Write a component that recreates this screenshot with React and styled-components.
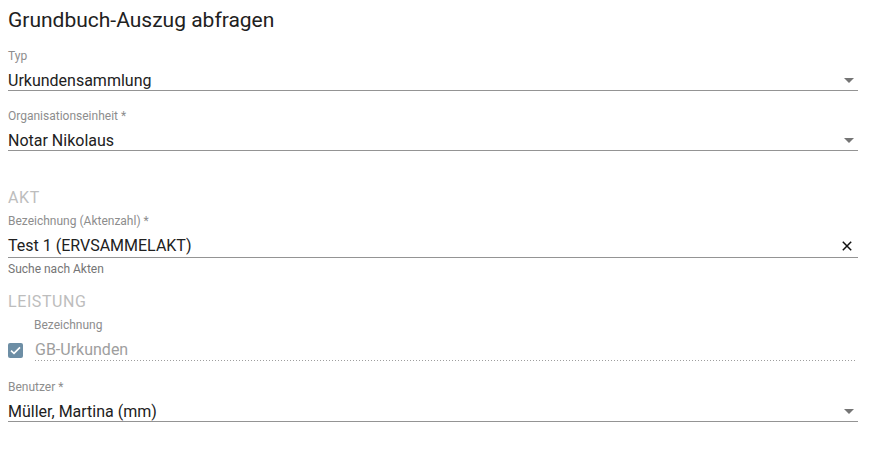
import React from 'react';
import styled, { createGlobalStyle } from 'styled-components';

const GlobalStyle = createGlobalStyle`
  body {
    margin: 0;
    background: #ffffff;
    font-family: Roboto, "Noto Sans", Arial, sans-serif;
    color: #212121;
  }
`;

const Page = styled.div`
  padding: 8px 16px 20px 8px;
  display: flex;
  flex-direction: column;
`;

const Title = styled.h2`
  margin: 0;
  font-size: 21px;
  line-height: 24px;
  font-weight: 400;
  color: #212121;
`;

const Field = styled.div`
  display: flex;
  flex-direction: column;
  margin-top: ${p => p.$mt || 0}px;
`;

const Label = styled.label`
  font-size: 12px;
  line-height: 14px;
  color: #8d8d8d;
`;

const InputRow = styled.div`
  display: flex;
  align-items: center;
  margin-top: 8px;
  padding-bottom: ${p => p.$pb || 0}px;
  border-bottom: 1px solid #949494;
`;

const Value = styled.div`
  flex: 1;
  font-size: 16px;
  line-height: 19px;
  color: #212121;
`;

const Arrow = styled.span`
  width: 0;
  height: 0;
  margin-right: 4px;
  border-left: 5px solid transparent;
  border-right: 5px solid transparent;
  border-top: 5px solid #757575;
`;

const ClearButton = styled.button`
  border: none;
  background: none;
  padding: 0;
  margin-right: 6px;
  display: flex;
  cursor: pointer;
`;

const Helper = styled.div`
  margin-top: 4px;
  font-size: 12px;
  line-height: 14px;
  color: #757575;
`;

const SectionHeading = styled.div`
  margin-top: ${p => p.$mt}px;
  font-size: 16px;
  line-height: 20px;
  letter-spacing: 0.6px;
  color: #bdbdbd;
  text-transform: uppercase;
`;

const SubLabel = styled(Label)`
  margin-left: 26px;
  margin-top: 6px;
`;

const CheckRow = styled.div`
  display: flex;
  align-items: flex-start;
  margin-top: 8px;
`;

const Checkbox = styled.span`
  width: 15px;
  height: 15px;
  margin-top: 3px;
  border-radius: 2px;
  background: #6d8ea5;
  display: flex;
  align-items: center;
  justify-content: center;
  flex-shrink: 0;
`;

const ReadonlyField = styled.div`
  flex: 1;
  margin-left: 12px;
  margin-right: 2px;
  padding-bottom: 2px;
  font-size: 16px;
  line-height: 19px;
  color: #9e9e9e;
  background-image: linear-gradient(to right, #9e9e9e 1px, transparent 1px);
  background-size: 3px 1px;
  background-repeat: repeat-x;
  background-position: 0 bottom;
`;

function SelectField({ label, value, mt }) {
  return (
    <Field $mt={mt}>
      <Label>{label}</Label>
      <InputRow>
        <Value>{value}</Value>
        <Arrow />
      </InputRow>
    </Field>
  );
}

export default function App() {
  return (
    <Page>
      <GlobalStyle />
      <Title>Grundbuch-Auszug abfragen</Title>

      <SelectField label="Typ" value="Urkundensammlung" mt={17} />
      <SelectField label="Organisationseinheit *" value="Notar Nikolaus" mt={18} />

      <SectionHeading $mt={37}>Akt</SectionHeading>
      <Field $mt={6}>
        <Label>Bezeichnung (Aktenzahl) *</Label>
        <InputRow $pb={2}>
          <Value>Test 1 (ERVSAMMELAKT)</Value>
          <ClearButton aria-label="clear">
            <svg width="10" height="10" viewBox="0 0 10 10">
              <path d="M0.8 0.8 L9.2 9.2 M9.2 0.8 L0.8 9.2" stroke="#111" strokeWidth="1.5" />
            </svg>
          </ClearButton>
        </InputRow>
        <Helper>Suche nach Akten</Helper>
      </Field>

      <SectionHeading $mt={16}>Leistung</SectionHeading>
      <SubLabel>Bezeichnung</SubLabel>
      <CheckRow>
        <Checkbox>
          <svg width="11" height="9" viewBox="0 0 11 9">
            <path d="M1 4.6 L4 7.4 L10 1.4" stroke="#fff" strokeWidth="1.6" fill="none" />
          </svg>
        </Checkbox>
        <ReadonlyField>GB-Urkunden</ReadonlyField>
      </CheckRow>

      <SelectField label="Benutzer *" value="Müller, Martina (mm)" mt={19} />
    </Page>
  );
}
